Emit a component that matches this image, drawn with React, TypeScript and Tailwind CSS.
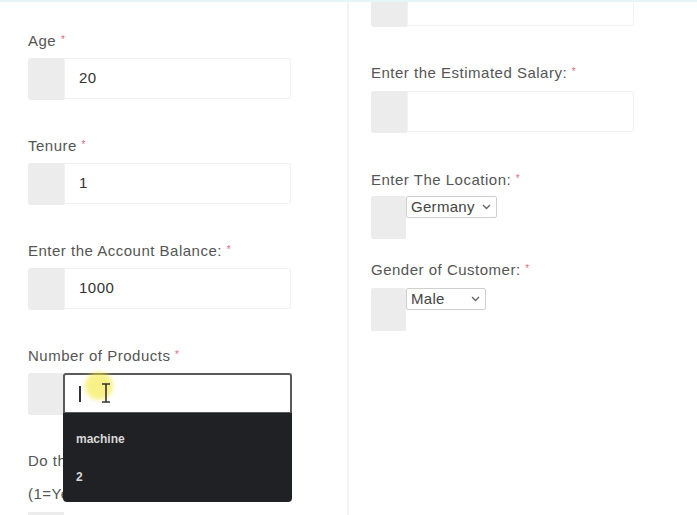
import React from "react";

const Label = ({ text, className = "" }: { text: string; className?: string }) => (
  <div className={"h-[18px] leading-[18px] text-[15px] tracking-[0.5px] text-[#555] whitespace-nowrap " + className}>
    {text} <span className="text-[#e06a7a] text-[10px] align-top relative top-[-1px]">*</span>
  </div>
);

const InputGroup = ({ value, className = "" }: { value?: string; className?: string }) => (
  <div className={"flex h-[42px] w-[263px] " + className}>
    <div className="w-[36px] h-[42px] bg-[#ececec] rounded-l-[3px]" />
    <div className="flex-1 h-[41px] bg-white border border-[#f1f1f1] rounded-r-[3px] flex items-center pl-[14px] text-[15px] tracking-[0.5px] text-[#333]">
      {value}
    </div>
  </div>
);

const SelectGroup = ({ value, w, className = "" }: { value: string; w: string; className?: string }) => (
  <div className={"flex h-[43px] " + className}>
    <div className="w-[35px] h-[43px] bg-[#ececec] rounded-[2px]" />
    <div className={"h-[22px] bg-white border border-[#cfcfcf] rounded-[2px] flex items-center justify-between pl-[4px] pr-[5px] text-[15px] tracking-[0.3px] text-[#444] " + w}>
      <span>{value}</span>
      <svg width="9" height="6" viewBox="0 0 9 6"><path d="M1 1 L4.5 4.5 L8 1" stroke="#666" strokeWidth="1.4" fill="none" /></svg>
    </div>
  </div>
);

export default function App() {
  return (
    <div className="w-[697px] h-[515px] overflow-hidden bg-white relative" style={{ fontFamily: '"Liberation Sans", Arial, sans-serif' }}>
      <div className="absolute top-0 left-0 right-0 h-[2px] bg-[#e6f5f5]" />
      <div className="flex h-full">
        <div className="w-[347px] pl-[28px] pt-[32px] shrink-0">
          <Label text="Age" />
          <InputGroup value="20" className="mt-[8px]" />
          <Label text="Tenure" className="mt-[37px]" />
          <InputGroup value="1" className="mt-[8px]" />
          <Label text="Enter the Account Balance:" className="mt-[37px]" />
          <InputGroup value="1000" className="mt-[8px]" />
          <Label text="Number of Products" className="mt-[37px]" />
          <div className="relative mt-[8px]">
            <div className="flex h-[42px] w-[264px]">
              <div className="w-[35px] h-[42px] bg-[#ececec] rounded-l-[3px]" />
              <div className="flex-1 h-[41px] bg-white border-2 border-[#5a5a5a] rounded-t-[3px] flex items-center pl-[14px]">
                <div className="w-[1.5px] h-[16px] bg-[#333]" />
              </div>
            </div>
            <div className="absolute left-[57px] top-[-1px] w-[28px] h-[28px] rounded-full bg-[#f5e83a] opacity-60 blur-[2px] z-10" />
            <svg className="absolute left-[72px] top-[10px] z-20" width="12" height="20" viewBox="0 0 12 20">
              <path d="M2 1 H10 M6 1 V19 M2 19 H10" stroke="#333" strokeWidth="1.6" fill="none" />
            </svg>
            <div className="absolute left-[35px] top-[40px] w-[229px] h-[89px] bg-[#202124] rounded-b-[4px] z-10 text-[12px] font-bold text-[#d8d8d8] pl-[13px]">
              <div className="mt-[19px] leading-[14px]">machine</div>
              <div className="mt-[24px] leading-[14px]">2</div>
            </div>
          </div>
          <div className="mt-[37px] h-[18px] leading-[18px] text-[15px] tracking-[0.5px] text-[#555] whitespace-nowrap">Do the customer have a credit card?</div>
          <div className="mt-[15px] h-[18px] leading-[18px] text-[15px] tracking-[0.5px] text-[#555] whitespace-nowrap">(1=Yes, 0=No)</div>
          <div className="mt-[9px] w-[36px] h-[42px] bg-[#ececec]" />
        </div>
        <div className="w-[2px] bg-[#f3f3f3] shrink-0" />
        <div className="pl-[22px] flex-1">
          <InputGroup className="mt-[-15px]" />
          <Label text="Enter the Estimated Salary:" className="mt-[37px]" />
          <InputGroup className="mt-[9px]" />
          <Label text="Enter The Location:" className="mt-[38px]" />
          <SelectGroup value="Germany" w="w-[91px]" className="mt-[7px]" />
          <Label text="Gender of Customer:" className="mt-[22px]" />
          <SelectGroup value="Male" w="w-[80px]" className="mt-[9px]" />
        </div>
      </div>
    </div>
  );
}
